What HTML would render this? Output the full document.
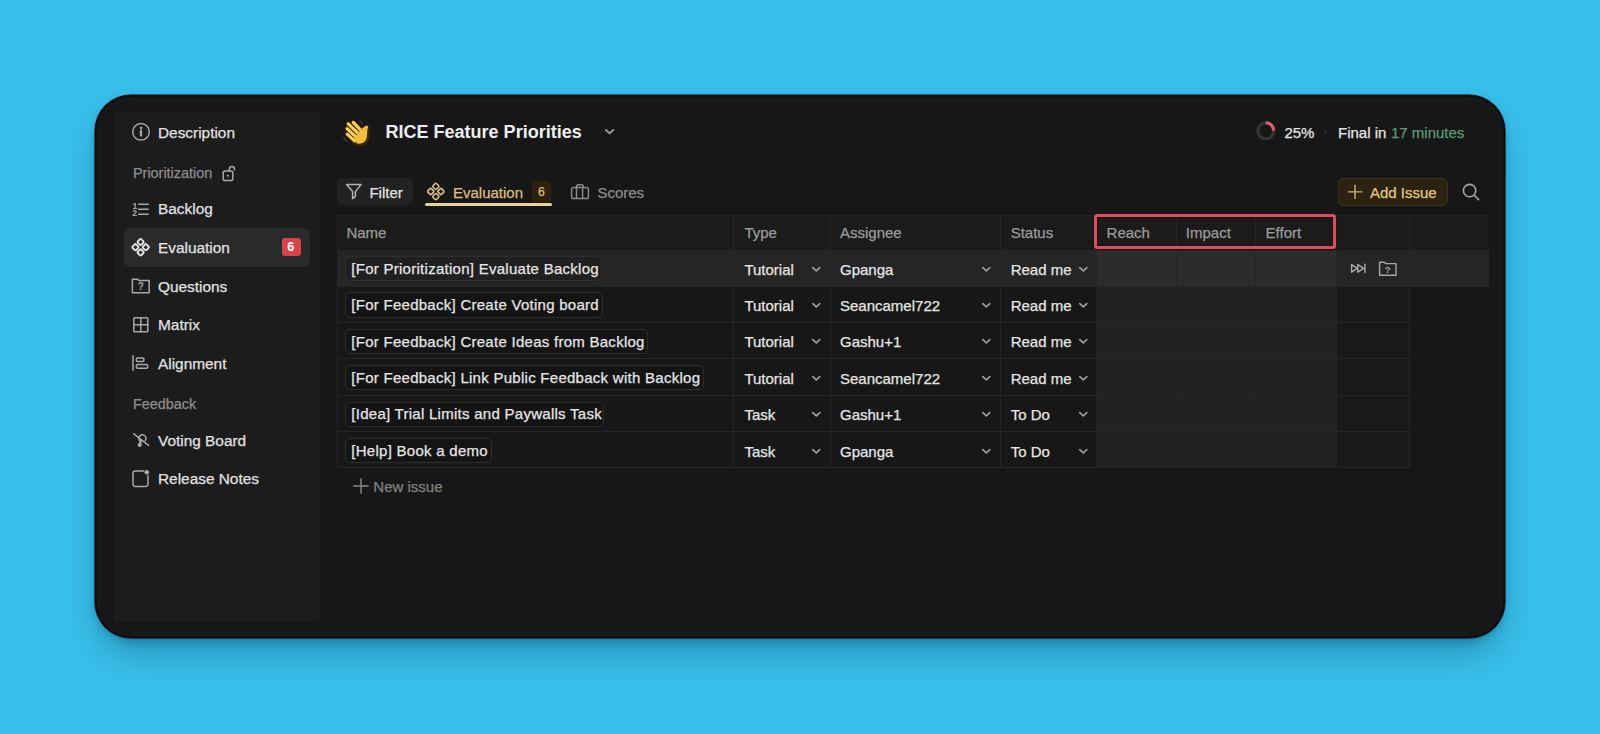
<!DOCTYPE html>
<html><head><meta charset="utf-8"><style>
html,body{margin:0;padding:0;}
body{width:1600px;height:734px;background:#38bfea;position:relative;overflow:hidden;font-family:"Liberation Sans", sans-serif;}
.t{position:absolute;white-space:nowrap;line-height:1;-webkit-text-stroke:0.25px currentColor;}
.r{position:absolute;}
svg.r{overflow:visible;}
</style></head><body>
<div class="r" style="left:95.00px;top:95.00px;width:1410.00px;height:543.00px;background:#171717;border-radius:36px;box-shadow:inset 0 0 0 1.5px rgba(0,8,14,0.75),0 0 0 0.8px rgba(0,10,15,0.7),0 4px 8px -2px rgba(0,30,60,0.3),0 18px 36px -8px rgba(0,40,70,0.38);"></div>
<div class="r" style="left:114.00px;top:111.00px;width:205.50px;height:511.00px;background:#1c1c1c;border-radius:2px;"></div>
<div class="r" style="left:124.00px;top:227.50px;width:186.00px;height:39.00px;background:#2a2a2a;border-radius:7px;"></div>
<div class="t" style="left:158.00px;top:124.96px;font-size:15.4px;color:#e2e2e2;font-weight:normal;">Description</div>
<div class="t" style="left:158.00px;top:201.36px;font-size:15.4px;color:#e2e2e2;font-weight:normal;">Backlog</div>
<div class="t" style="left:158.00px;top:240.06px;font-size:15.4px;color:#e2e2e2;font-weight:normal;">Evaluation</div>
<div class="t" style="left:158.00px;top:278.66px;font-size:15.4px;color:#e2e2e2;font-weight:normal;">Questions</div>
<div class="t" style="left:158.00px;top:317.16px;font-size:15.4px;color:#e2e2e2;font-weight:normal;">Matrix</div>
<div class="t" style="left:158.00px;top:355.86px;font-size:15.4px;color:#e2e2e2;font-weight:normal;">Alignment</div>
<div class="t" style="left:158.00px;top:432.66px;font-size:15.4px;color:#e2e2e2;font-weight:normal;">Voting Board</div>
<div class="t" style="left:158.00px;top:471.16px;font-size:15.4px;color:#e2e2e2;font-weight:normal;">Release Notes</div>
<div class="t" style="left:133.00px;top:165.81px;font-size:14.4px;color:#8e8e8e;font-weight:normal;">Prioritization</div>
<div class="t" style="left:133.00px;top:397.11px;font-size:14.4px;color:#8e8e8e;font-weight:normal;">Feedback</div>
<div class="r" style="left:282.00px;top:238.00px;width:19.00px;height:18.00px;background:#d9434b;border-radius:3px;"></div>
<div class="t" style="left:287.30px;top:240.92px;font-size:12.5px;color:#ffffff;font-weight:bold;-webkit-text-stroke:0;">6</div>
<svg class="r" style="left:131.00px;top:122.00px;" width="20" height="20" viewBox="0 0 20 20"><circle cx="10" cy="9.8" r="8.3" fill="none" stroke="#a8a8a8" stroke-width="1.5" stroke-linecap="round" stroke-linejoin="round"/><line x1="10" y1="8.8" x2="10" y2="13.6" stroke="#a8a8a8" stroke-width="2.3" stroke-linecap="round"/><circle cx="10" cy="6.1" r="1.35" fill="#a8a8a8"/></svg>
<svg class="r" style="left:220.00px;top:164.00px;" width="18" height="18" viewBox="0 0 18 18"><rect x="3.2" y="7" width="9.6" height="9.6" rx="1.8" fill="none" stroke="#a8a8a8" stroke-width="1.5" stroke-linecap="round" stroke-linejoin="round"/><path d="M9.3 7 V5.2 a2.6 2.6 0 0 1 5.2 0 v0.6" fill="none" stroke="#a8a8a8" stroke-width="1.5" stroke-linecap="round" stroke-linejoin="round"/><circle cx="8" cy="11.8" r="1" fill="#a8a8a8"/></svg>
<svg class="r" style="left:131.00px;top:201.00px;" width="20" height="16" viewBox="0 0 20 16"><text x="1.6" y="7.6" font-family="Liberation Sans" font-weight="bold" font-size="8.6" fill="#a8a8a8">1</text><text x="1.2" y="15.2" font-family="Liberation Sans" font-weight="bold" font-size="8.6" fill="#a8a8a8">2</text><path d="M7.6 3.2 H17.2 M7.6 8.2 H17.2 M7.6 13.2 H17.2" fill="none" stroke="#a8a8a8" stroke-width="1.5" stroke-linecap="round" stroke-linejoin="round"/></svg>
<svg class="r" style="left:130.00px;top:236.00px;" width="22" height="22" viewBox="0 0 22 22"><rect x="-2.47" y="-2.47" width="4.95" height="4.95" rx="1.2" transform="translate(10.60 6.00) rotate(45)" fill="none" stroke="#e6e6e6" stroke-width="1.9"/><rect x="-2.47" y="-2.47" width="4.95" height="4.95" rx="1.2" transform="translate(5.40 11.20) rotate(45)" fill="none" stroke="#e6e6e6" stroke-width="1.9"/><rect x="-2.47" y="-2.47" width="4.95" height="4.95" rx="1.2" transform="translate(15.80 11.20) rotate(45)" fill="none" stroke="#e6e6e6" stroke-width="1.9"/><rect x="-2.47" y="-2.47" width="4.95" height="4.95" rx="1.2" transform="translate(10.60 16.40) rotate(45)" fill="none" stroke="#e6e6e6" stroke-width="1.9"/></svg>
<svg class="r" style="left:130.00px;top:276.00px;" width="22" height="20" viewBox="0 0 22 20"><path d="M2.4 3.2 H7.6 L9 4.6 H19.2 V16.8 H2.4 Z" fill="none" stroke="#a8a8a8" stroke-width="1.5" stroke-linecap="round" stroke-linejoin="round"/><text x="10.8" y="14" text-anchor="middle" font-family="Liberation Sans" font-weight="bold" font-size="10" fill="#a8a8a8">?</text></svg>
<svg class="r" style="left:131.00px;top:315.00px;" width="20" height="20" viewBox="0 0 20 20"><rect x="2.8" y="2.8" width="14" height="14" rx="0.8" fill="none" stroke="#a8a8a8" stroke-width="1.5" stroke-linecap="round" stroke-linejoin="round"/><path d="M9.8 2.8 V16.8 M2.8 9.8 H16.8" fill="none" stroke="#a8a8a8" stroke-width="1.5" stroke-linecap="round" stroke-linejoin="round"/></svg>
<svg class="r" style="left:130.00px;top:353.00px;" width="20" height="20" viewBox="0 0 20 20"><path d="M3 2.8 V17.2" fill="none" stroke="#a8a8a8" stroke-width="1.5" stroke-linecap="round" stroke-linejoin="round"/><rect x="6.4" y="5" width="7.4" height="3.6" rx="1" fill="none" stroke="#a8a8a8" stroke-width="1.5" stroke-linecap="round" stroke-linejoin="round"/><rect x="6.4" y="11.6" width="11.2" height="3.6" rx="1" fill="none" stroke="#a8a8a8" stroke-width="1.5" stroke-linecap="round" stroke-linejoin="round"/></svg>
<svg class="r" style="left:130.00px;top:430.00px;" width="22" height="20" viewBox="0 0 22 20"><path d="M10.4 11.4 A3.6 3.6 0 1 1 15.2 10.6" fill="none" stroke="#a8a8a8" stroke-width="1.5" stroke-linecap="round" stroke-linejoin="round"/><path d="M10.8 11.2 L9.8 14.4" fill="none" stroke="#a8a8a8" stroke-width="2.2" stroke-linecap="round"/><circle cx="9.7" cy="15" r="2.1" fill="#a8a8a8"/><path d="M3.8 3.8 L18.6 15.4" fill="none" stroke="#a8a8a8" stroke-width="1.5" stroke-linecap="round" stroke-linejoin="round"/></svg>
<svg class="r" style="left:130.00px;top:468.00px;" width="22" height="22" viewBox="0 0 22 22"><path d="M13.8 3 H5.2 a2.2 2.2 0 0 0 -2.2 2.2 V16.2 a2.2 2.2 0 0 0 2.2 2.2 H15.8 a2.2 2.2 0 0 0 2.2 -2.2 V7.6" fill="none" stroke="#a8a8a8" stroke-width="1.5" stroke-linecap="round" stroke-linejoin="round"/><circle cx="16.8" cy="4.2" r="2.3" fill="#a8a8a8"/></svg>
<div class="t" style="left:385.60px;top:122.86px;font-size:18px;color:#efefef;font-weight:bold;-webkit-text-stroke:0;">RICE Feature Priorities</div>
<svg class="r" style="left:601.00px;top:124.00px;" width="18" height="14" viewBox="0 0 18 14"><path d="M5 6 L8.6 9.4 L12.2 6" fill="none" stroke="#9a9a9a" stroke-width="1.9" stroke-linecap="round" stroke-linejoin="round"/></svg>
<svg class="r" style="left:337.40px;top:114.20px;" width="36" height="36" viewBox="0 0 36 36">
<g stroke-linecap="round" fill="none">
<path d="M6.8 23.5 Q7.8 26.2 10 27.6" stroke="#4a4a4a" stroke-width="1.1"/>
<path d="M22.5 6.8 Q24.8 8 25.8 10.6" stroke="#3e3e3e" stroke-width="1.1"/>
<path d="M16.5 26.5 Q21 30.8 25.5 29 Q29.6 27 30 21.5 L30.2 14.5" stroke="#3b2a08" stroke-width="5.2"/>
<path d="M10.3 20.2 L17.6 26.8" stroke="#3b2a08" stroke-width="4.6"/>
<path d="M10.1 14.6 L19 23" stroke="#3b2a08" stroke-width="4.6"/>
<path d="M11.2 9.9 L20.2 18.4" stroke="#3b2a08" stroke-width="4.6"/>
<path d="M16.3 8.4 L23.2 15.6" stroke="#3b2a08" stroke-width="4.6"/>
</g>
<path d="M15 24 L23 15 L28.4 12.6 Q30.6 12 30.4 14.8 L30 22 Q29.4 28.4 23.6 29.6 Q18.6 30.2 15 25.5 Z" fill="#f4bd3a"/>
<g stroke-linecap="round" fill="none">
<path d="M10.3 20.2 L17.6 26.8" stroke="#3b2a08" stroke-width="4.4"/>
<path d="M10.3 20.2 L17.6 26.8" stroke="#f9cf55" stroke-width="3.1"/>
<path d="M10.1 14.6 L19 23" stroke="#3b2a08" stroke-width="4.4"/>
<path d="M10.1 14.6 L19 23" stroke="#f9cf55" stroke-width="3.1"/>
<path d="M11.2 9.9 L20.2 18.4" stroke="#3b2a08" stroke-width="4.4"/>
<path d="M11.2 9.9 L20.2 18.4" stroke="#f9cf55" stroke-width="3.1"/>
<path d="M16.3 8.4 L23.2 15.6" stroke="#3b2a08" stroke-width="4.4"/>
<path d="M16.3 8.4 L23.2 15.6" stroke="#f9cf55" stroke-width="3.1"/>
<path d="M29.4 13.2 L26 20" stroke="#f4bd3a" stroke-width="3.2"/>
</g>
<path d="M17 24.5 L23.5 16.5 L28.5 14 L29.2 22 Q28.6 27.8 23.4 28.6 Q19.4 29 17 25.5 Z" fill="#f4bd3a"/>
</svg>
<svg class="r" style="left:1255.00px;top:120.00px;" width="22" height="22" viewBox="0 0 22 22"><circle cx="10.8" cy="10.8" r="8" fill="none" stroke="#353535" stroke-width="3"/><path d="M10.8 2.8 A8 8 0 0 1 18.8 10.8" fill="none" stroke="#dc5f69" stroke-width="3"/></svg>
<div class="t" style="left:1284.40px;top:124.60px;font-size:15px;color:#e6e6e6;font-weight:normal;">25%</div>
<div class="r" style="left:1323.50px;top:129.50px;width:3.00px;height:3.00px;background:#2e2e2e;border-radius:50%;"></div>
<div class="t" style="left:1338.00px;top:124.60px;font-size:15px;color:#e6e6e6;font-weight:normal;">Final in</div>
<div class="t" style="left:1391.00px;top:124.60px;font-size:15px;color:#5e9a74;font-weight:normal;">17 minutes</div>
<div class="r" style="left:337.00px;top:178.00px;width:75.60px;height:27.00px;background:#222222;border-radius:5px;"></div>
<svg class="r" style="left:344.00px;top:182.00px;" width="20" height="20" viewBox="0 0 20 20"><path d="M2.6 2.6 H17 L11.4 9.6 V14.6 L8.6 16.6 V9.6 Z" fill="none" stroke="#b5b5b5" stroke-width="1.5" stroke-linejoin="round"/></svg>
<div class="t" style="left:369.40px;top:184.50px;font-size:15px;color:#e2e2e2;font-weight:normal;">Filter</div>
<svg class="r" style="left:425.00px;top:181.00px;" width="22" height="22" viewBox="0 0 22 22"><rect x="-2.47" y="-2.47" width="4.95" height="4.95" rx="1.2" transform="translate(10.80 5.40) rotate(45)" fill="none" stroke="#dcbf84" stroke-width="1.6"/><rect x="-2.47" y="-2.47" width="4.95" height="4.95" rx="1.2" transform="translate(5.70 10.50) rotate(45)" fill="none" stroke="#dcbf84" stroke-width="1.6"/><rect x="-2.47" y="-2.47" width="4.95" height="4.95" rx="1.2" transform="translate(15.90 10.50) rotate(45)" fill="none" stroke="#dcbf84" stroke-width="1.6"/><rect x="-2.47" y="-2.47" width="4.95" height="4.95" rx="1.2" transform="translate(10.80 15.60) rotate(45)" fill="none" stroke="#dcbf84" stroke-width="1.6"/></svg>
<div class="t" style="left:453.00px;top:184.50px;font-size:15px;color:#dcbf84;font-weight:normal;">Evaluation</div>
<div class="r" style="left:532.00px;top:181.00px;width:19.00px;height:21.00px;background:#2b210c;border-radius:4px;box-shadow:0 0 3px #2b210c;"></div>
<div class="t" style="left:537.90px;top:185.77px;font-size:12.2px;color:#dcc080;font-weight:normal;">6</div>
<div class="r" style="left:425.00px;top:202.80px;width:127.00px;height:3.30px;background:#e9d29c;border-radius:2px;"></div>
<svg class="r" style="left:569.00px;top:182.00px;" width="22" height="20" viewBox="0 0 22 20"><rect x="2.6" y="5.4" width="16.8" height="11.2" rx="1.8" fill="none" stroke="#8a8a8a" stroke-width="1.5"/><path d="M7.5 5.4 V4.6 a1.8 1.8 0 0 1 1.8 -1.8 H12.5 a1.8 1.8 0 0 1 1.8 1.8 V5.4 M7.5 5.4 V16.6 M13.6 5.4 V16.6" fill="none" stroke="#8a8a8a" stroke-width="1.5"/></svg>
<div class="t" style="left:597.40px;top:184.50px;font-size:15px;color:#8d8d8d;font-weight:normal;">Scores</div>
<div class="r" style="left:1338.00px;top:178.00px;width:110.00px;height:27.70px;background:#2b2310;border:1px solid #3a3119;box-sizing:border-box;border-radius:5px;"></div>
<svg class="r" style="left:1345.00px;top:182.00px;" width="20" height="20" viewBox="0 0 20 20"><path d="M10 2.8 V17 M2.8 9.9 H17.5" fill="none" stroke="#cdb27a" stroke-width="1.4"/></svg>
<div class="t" style="left:1370.00px;top:184.80px;font-size:15px;color:#e6c783;font-weight:normal;">Add Issue</div>
<svg class="r" style="left:1460.00px;top:181.00px;" width="22" height="22" viewBox="0 0 22 22"><circle cx="9.6" cy="9.6" r="6.2" fill="none" stroke="#a5a5a5" stroke-width="1.6"/><path d="M14.2 14.2 L18.6 18.6" stroke="#a5a5a5" stroke-width="1.6" stroke-linecap="round"/></svg>
<div class="r" style="left:337.40px;top:214.50px;width:1151.60px;height:35.20px;background:#1b1b1b;"></div>
<div class="r" style="left:337.40px;top:249.70px;width:1072.20px;height:218.28px;background:#171717;"></div>
<div class="r" style="left:1096.00px;top:249.70px;width:240.00px;height:218.28px;background:#222222;"></div>
<div class="r" style="left:1336.00px;top:249.70px;width:73.60px;height:218.28px;background:#191919;"></div>
<div class="r" style="left:337.40px;top:249.70px;width:1151.60px;height:36.38px;background:#252525;"></div>
<div class="r" style="left:1096.00px;top:249.70px;width:240.00px;height:36.38px;background:#2c2c2c;"></div>
<div class="r" style="left:337.40px;top:214.50px;width:1151.60px;height:1.00px;background:#202020;"></div>
<div class="r" style="left:337.40px;top:249.70px;width:1151.60px;height:1.00px;background:#252525;"></div>
<div class="r" style="left:337.40px;top:285.58px;width:1151.60px;height:1.00px;background:#252525;"></div>
<div class="r" style="left:337.40px;top:321.96px;width:1072.20px;height:1.00px;background:#252525;"></div>
<div class="r" style="left:337.40px;top:358.34px;width:1072.20px;height:1.00px;background:#252525;"></div>
<div class="r" style="left:337.40px;top:394.72px;width:1072.20px;height:1.00px;background:#252525;"></div>
<div class="r" style="left:337.40px;top:431.10px;width:1072.20px;height:1.00px;background:#252525;"></div>
<div class="r" style="left:337.40px;top:467.48px;width:1072.20px;height:1.00px;background:#252525;"></div>
<div class="r" style="left:336.90px;top:214.50px;width:1.00px;height:253.48px;background:#252525;"></div>
<div class="r" style="left:733.00px;top:214.50px;width:1.00px;height:253.48px;background:#252525;"></div>
<div class="r" style="left:829.50px;top:214.50px;width:1.00px;height:253.48px;background:#252525;"></div>
<div class="r" style="left:999.80px;top:214.50px;width:1.00px;height:253.48px;background:#252525;"></div>
<div class="r" style="left:1095.50px;top:214.50px;width:1.00px;height:253.48px;background:#252525;"></div>
<div class="r" style="left:1176.30px;top:214.50px;width:1.00px;height:253.48px;background:#252525;"></div>
<div class="r" style="left:1254.50px;top:214.50px;width:1.00px;height:253.48px;background:#252525;"></div>
<div class="r" style="left:1335.50px;top:214.50px;width:1.00px;height:253.48px;background:#252525;"></div>
<div class="r" style="left:1409.10px;top:214.50px;width:1.00px;height:253.48px;background:#252525;"></div>
<div class="t" style="left:346.40px;top:225.30px;font-size:15px;color:#9c9c9c;font-weight:normal;">Name</div>
<div class="t" style="left:744.40px;top:225.30px;font-size:15px;color:#9c9c9c;font-weight:normal;">Type</div>
<div class="t" style="left:840.00px;top:225.30px;font-size:15px;color:#9c9c9c;font-weight:normal;">Assignee</div>
<div class="t" style="left:1010.70px;top:225.30px;font-size:15px;color:#9c9c9c;font-weight:normal;">Status</div>
<div class="t" style="left:1106.60px;top:225.30px;font-size:15px;color:#9c9c9c;font-weight:normal;">Reach</div>
<div class="t" style="left:1185.80px;top:225.30px;font-size:15px;color:#9c9c9c;font-weight:normal;">Impact</div>
<div class="t" style="left:1265.60px;top:225.30px;font-size:15px;color:#9c9c9c;font-weight:normal;">Effort</div>
<div class="r" style="left:345.00px;top:256.00px;width:257.20px;height:25.20px;border:1.2px solid #2e2e2e;box-sizing:border-box;border-radius:5px;background:rgba(0,0,0,0.12);"></div>
<div class="t" style="left:351.30px;top:260.80px;font-size:15px;color:#e6e6e6;font-weight:normal;letter-spacing:0.27px;">[For Prioritization] Evaluate Backlog</div>
<div class="t" style="left:744.40px;top:261.60px;font-size:15px;color:#e6e6e6;font-weight:normal;">Tutorial</div>
<svg class="r" style="left:811.00px;top:264.70px;" width="11" height="9" viewBox="0 0 11 9"><path d="M1.8 2.6 L5.3 5.9 L8.8 2.6" fill="none" stroke="#9d9d9d" stroke-width="1.7" stroke-linecap="round" stroke-linejoin="round"/></svg>
<div class="t" style="left:840.00px;top:261.60px;font-size:15px;color:#e6e6e6;font-weight:normal;">Gpanga</div>
<svg class="r" style="left:980.60px;top:264.70px;" width="11" height="9" viewBox="0 0 11 9"><path d="M1.8 2.6 L5.3 5.9 L8.8 2.6" fill="none" stroke="#9d9d9d" stroke-width="1.7" stroke-linecap="round" stroke-linejoin="round"/></svg>
<div class="t" style="left:1010.70px;top:261.60px;font-size:15px;color:#e6e6e6;font-weight:normal;">Read me</div>
<svg class="r" style="left:1078.00px;top:264.70px;" width="11" height="9" viewBox="0 0 11 9"><path d="M1.8 2.6 L5.3 5.9 L8.8 2.6" fill="none" stroke="#9d9d9d" stroke-width="1.7" stroke-linecap="round" stroke-linejoin="round"/></svg>
<div class="r" style="left:345.00px;top:292.38px;width:258.00px;height:25.20px;border:1.2px solid #2e2e2e;box-sizing:border-box;border-radius:5px;background:rgba(0,0,0,0.12);"></div>
<div class="t" style="left:351.30px;top:297.18px;font-size:15px;color:#e6e6e6;font-weight:normal;letter-spacing:0.27px;">[For Feedback] Create Voting board</div>
<div class="t" style="left:744.40px;top:297.98px;font-size:15px;color:#e6e6e6;font-weight:normal;">Tutorial</div>
<svg class="r" style="left:811.00px;top:301.08px;" width="11" height="9" viewBox="0 0 11 9"><path d="M1.8 2.6 L5.3 5.9 L8.8 2.6" fill="none" stroke="#9d9d9d" stroke-width="1.7" stroke-linecap="round" stroke-linejoin="round"/></svg>
<div class="t" style="left:840.00px;top:297.98px;font-size:15px;color:#e6e6e6;font-weight:normal;">Seancamel722</div>
<svg class="r" style="left:980.60px;top:301.08px;" width="11" height="9" viewBox="0 0 11 9"><path d="M1.8 2.6 L5.3 5.9 L8.8 2.6" fill="none" stroke="#9d9d9d" stroke-width="1.7" stroke-linecap="round" stroke-linejoin="round"/></svg>
<div class="t" style="left:1010.70px;top:297.98px;font-size:15px;color:#e6e6e6;font-weight:normal;">Read me</div>
<svg class="r" style="left:1078.00px;top:301.08px;" width="11" height="9" viewBox="0 0 11 9"><path d="M1.8 2.6 L5.3 5.9 L8.8 2.6" fill="none" stroke="#9d9d9d" stroke-width="1.7" stroke-linecap="round" stroke-linejoin="round"/></svg>
<div class="r" style="left:345.00px;top:328.76px;width:302.60px;height:25.20px;border:1.2px solid #2e2e2e;box-sizing:border-box;border-radius:5px;background:rgba(0,0,0,0.12);"></div>
<div class="t" style="left:351.30px;top:333.56px;font-size:15px;color:#e6e6e6;font-weight:normal;letter-spacing:0.27px;">[For Feedback] Create Ideas from Backlog</div>
<div class="t" style="left:744.40px;top:334.36px;font-size:15px;color:#e6e6e6;font-weight:normal;">Tutorial</div>
<svg class="r" style="left:811.00px;top:337.46px;" width="11" height="9" viewBox="0 0 11 9"><path d="M1.8 2.6 L5.3 5.9 L8.8 2.6" fill="none" stroke="#9d9d9d" stroke-width="1.7" stroke-linecap="round" stroke-linejoin="round"/></svg>
<div class="t" style="left:840.00px;top:334.36px;font-size:15px;color:#e6e6e6;font-weight:normal;">Gashu+1</div>
<svg class="r" style="left:980.60px;top:337.46px;" width="11" height="9" viewBox="0 0 11 9"><path d="M1.8 2.6 L5.3 5.9 L8.8 2.6" fill="none" stroke="#9d9d9d" stroke-width="1.7" stroke-linecap="round" stroke-linejoin="round"/></svg>
<div class="t" style="left:1010.70px;top:334.36px;font-size:15px;color:#e6e6e6;font-weight:normal;">Read me</div>
<svg class="r" style="left:1078.00px;top:337.46px;" width="11" height="9" viewBox="0 0 11 9"><path d="M1.8 2.6 L5.3 5.9 L8.8 2.6" fill="none" stroke="#9d9d9d" stroke-width="1.7" stroke-linecap="round" stroke-linejoin="round"/></svg>
<div class="r" style="left:345.00px;top:365.14px;width:358.80px;height:25.20px;border:1.2px solid #2e2e2e;box-sizing:border-box;border-radius:5px;background:rgba(0,0,0,0.12);"></div>
<div class="t" style="left:351.30px;top:369.94px;font-size:15px;color:#e6e6e6;font-weight:normal;letter-spacing:0.27px;">[For Feedback] Link Public Feedback with Backlog</div>
<div class="t" style="left:744.40px;top:370.74px;font-size:15px;color:#e6e6e6;font-weight:normal;">Tutorial</div>
<svg class="r" style="left:811.00px;top:373.84px;" width="11" height="9" viewBox="0 0 11 9"><path d="M1.8 2.6 L5.3 5.9 L8.8 2.6" fill="none" stroke="#9d9d9d" stroke-width="1.7" stroke-linecap="round" stroke-linejoin="round"/></svg>
<div class="t" style="left:840.00px;top:370.74px;font-size:15px;color:#e6e6e6;font-weight:normal;">Seancamel722</div>
<svg class="r" style="left:980.60px;top:373.84px;" width="11" height="9" viewBox="0 0 11 9"><path d="M1.8 2.6 L5.3 5.9 L8.8 2.6" fill="none" stroke="#9d9d9d" stroke-width="1.7" stroke-linecap="round" stroke-linejoin="round"/></svg>
<div class="t" style="left:1010.70px;top:370.74px;font-size:15px;color:#e6e6e6;font-weight:normal;">Read me</div>
<svg class="r" style="left:1078.00px;top:373.84px;" width="11" height="9" viewBox="0 0 11 9"><path d="M1.8 2.6 L5.3 5.9 L8.8 2.6" fill="none" stroke="#9d9d9d" stroke-width="1.7" stroke-linecap="round" stroke-linejoin="round"/></svg>
<div class="r" style="left:345.00px;top:401.52px;width:259.00px;height:25.20px;border:1.2px solid #2e2e2e;box-sizing:border-box;border-radius:5px;background:rgba(0,0,0,0.12);"></div>
<div class="t" style="left:351.30px;top:406.32px;font-size:15px;color:#e6e6e6;font-weight:normal;letter-spacing:0.27px;">[Idea] Trial Limits and Paywalls Task</div>
<div class="t" style="left:744.40px;top:407.12px;font-size:15px;color:#e6e6e6;font-weight:normal;">Task</div>
<svg class="r" style="left:811.00px;top:410.22px;" width="11" height="9" viewBox="0 0 11 9"><path d="M1.8 2.6 L5.3 5.9 L8.8 2.6" fill="none" stroke="#9d9d9d" stroke-width="1.7" stroke-linecap="round" stroke-linejoin="round"/></svg>
<div class="t" style="left:840.00px;top:407.12px;font-size:15px;color:#e6e6e6;font-weight:normal;">Gashu+1</div>
<svg class="r" style="left:980.60px;top:410.22px;" width="11" height="9" viewBox="0 0 11 9"><path d="M1.8 2.6 L5.3 5.9 L8.8 2.6" fill="none" stroke="#9d9d9d" stroke-width="1.7" stroke-linecap="round" stroke-linejoin="round"/></svg>
<div class="t" style="left:1010.70px;top:407.12px;font-size:15px;color:#e6e6e6;font-weight:normal;">To Do</div>
<svg class="r" style="left:1078.00px;top:410.22px;" width="11" height="9" viewBox="0 0 11 9"><path d="M1.8 2.6 L5.3 5.9 L8.8 2.6" fill="none" stroke="#9d9d9d" stroke-width="1.7" stroke-linecap="round" stroke-linejoin="round"/></svg>
<div class="r" style="left:345.00px;top:437.90px;width:146.60px;height:25.20px;border:1.2px solid #2e2e2e;box-sizing:border-box;border-radius:5px;background:rgba(0,0,0,0.12);"></div>
<div class="t" style="left:351.30px;top:442.70px;font-size:15px;color:#e6e6e6;font-weight:normal;letter-spacing:0.27px;">[Help] Book a demo</div>
<div class="t" style="left:744.40px;top:443.50px;font-size:15px;color:#e6e6e6;font-weight:normal;">Task</div>
<svg class="r" style="left:811.00px;top:446.60px;" width="11" height="9" viewBox="0 0 11 9"><path d="M1.8 2.6 L5.3 5.9 L8.8 2.6" fill="none" stroke="#9d9d9d" stroke-width="1.7" stroke-linecap="round" stroke-linejoin="round"/></svg>
<div class="t" style="left:840.00px;top:443.50px;font-size:15px;color:#e6e6e6;font-weight:normal;">Gpanga</div>
<svg class="r" style="left:980.60px;top:446.60px;" width="11" height="9" viewBox="0 0 11 9"><path d="M1.8 2.6 L5.3 5.9 L8.8 2.6" fill="none" stroke="#9d9d9d" stroke-width="1.7" stroke-linecap="round" stroke-linejoin="round"/></svg>
<div class="t" style="left:1010.70px;top:443.50px;font-size:15px;color:#e6e6e6;font-weight:normal;">To Do</div>
<svg class="r" style="left:1078.00px;top:446.60px;" width="11" height="9" viewBox="0 0 11 9"><path d="M1.8 2.6 L5.3 5.9 L8.8 2.6" fill="none" stroke="#9d9d9d" stroke-width="1.7" stroke-linecap="round" stroke-linejoin="round"/></svg>
<svg class="r" style="left:1348.00px;top:260.00px;" width="20" height="16" viewBox="0 0 20 16"><path d="M3.6 4.6 L9.4 8.4 L3.6 12.2 Z M9.8 4.6 L15.6 8.4 L9.8 12.2 Z M16.9 4.3 V12.6" fill="none" stroke="#a8a8a8" stroke-width="1.45" stroke-linejoin="round" stroke-linecap="round"/></svg>
<svg class="r" style="left:1377.00px;top:259.00px;" width="22" height="20" viewBox="0 0 22 20"><path d="M2.6 3.2 H7.4 L8.8 4.6 H19 V16.2 H2.6 Z" fill="none" stroke="#a8a8a8" stroke-width="1.4" stroke-linejoin="round"/><text x="10.8" y="13.6" text-anchor="middle" font-family="Liberation Sans" font-weight="bold" font-size="9.6" fill="#a8a8a8">?</text></svg>
<div class="r" style="left:1094.00px;top:214.40px;width:242.00px;height:34.90px;border:3.9px solid #dc4e5d;box-sizing:border-box;border-radius:3px;box-shadow:0 0 0 1px rgba(50,0,8,0.55), inset 0 0 0 1px rgba(50,0,8,0.45);"></div>
<svg class="r" style="left:351.00px;top:476.00px;" width="20" height="20" viewBox="0 0 20 20"><path d="M10 2.3 V17.8 M2.3 10 H17.6" fill="none" stroke="#8a8a8a" stroke-width="1.4"/></svg>
<div class="t" style="left:373.30px;top:479.00px;font-size:15px;color:#828282;font-weight:normal;">New issue</div>
</body></html>
